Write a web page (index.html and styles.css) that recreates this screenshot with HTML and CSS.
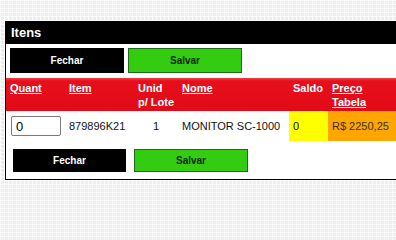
FILE: index.html
```html
<!DOCTYPE html>
<html lang="pt">
<head>
<meta charset="utf-8">
<title>Itens</title>
<link rel="stylesheet" href="styles.css">
</head>
<body>
<div class="panel">
  <div class="panel-title">Itens</div>
  <div class="toolbar toolbar-top">
    <button class="btn btn-dark">Fechar</button>
    <button class="btn btn-green">Salvar</button>
  </div>
  <table class="grid">
    <colgroup>
      <col class="c-quant"><col class="c-item"><col class="c-unid"><col class="c-nome"><col class="c-saldo"><col class="c-preco">
    </colgroup>
    <thead>
      <tr>
        <th><a href="#">Quant</a></th>
        <th><a href="#">Item</a></th>
        <th>Unid<br>p/ Lote</th>
        <th><a href="#">Nome</a></th>
        <th>Saldo</th>
        <th><a href="#">Preço<br>Tabela</a></th>
      </tr>
    </thead>
    <tbody>
      <tr>
        <td><input class="qty" type="text" value="0"></td>
        <td>879896K21</td>
        <td class="center">1</td>
        <td>MONITOR SC-1000</td>
        <td class="saldo">0</td>
        <td class="preco">R$ 2250,25</td>
      </tr>
    </tbody>
  </table>
  <div class="toolbar toolbar-bottom">
    <button class="btn btn-dark">Fechar</button>
    <button class="btn btn-green">Salvar</button>
  </div>
</div>
</body>
</html>
```

FILE: styles.css
```css
html, body {
  margin: 0;
  padding: 0;
  overflow: hidden;
}
body {
  width: 396px;
  height: 209px;
  background-color: #eeeeee;
  background-image:
    linear-gradient(90deg, rgba(255,255,255,0.85) 1px, transparent 1px),
    linear-gradient(rgba(255,255,255,0.85) 1px, transparent 1px);
  background-size: 4px 4px;
  font-family: "Liberation Sans", Arial, sans-serif;
}
.panel {
  margin: 21px 0 0 5px;
  width: 390px;
  border: 1px solid #000;
  border-right: none;
  background: #fff;
}
.panel-title {
  background: #000;
  color: #fff;
  font-weight: bold;
  font-size: 13px;
  height: 22px;
  line-height: 22px;
  padding-left: 5px;
}
.toolbar {
  display: flex;
}
.toolbar-top {
  padding: 4px 0 5px 4px;
  gap: 4px;
}
.toolbar-bottom {
  padding: 8px 0 7px 7px;
  gap: 8px;
}
.btn {
  font-family: "Liberation Sans", Arial, sans-serif;
  font-weight: bold;
  font-size: 10px;
  padding: 0;
  margin: 0;
  cursor: pointer;
  box-sizing: border-box;
}
.toolbar-top .btn {
  width: 114px;
  height: 25px;
}
.toolbar-bottom .btn {
  height: 23px;
}
.toolbar-bottom .btn-dark { width: 113px; }
.toolbar-bottom .btn-green { width: 114px; }
.btn-dark {
  background: #000;
  color: #fff;
  border: 1px solid #000;
}
.btn-green {
  background: #33cc11;
  color: #0d2a06;
  border: 1px solid #1d6a1a;
}
.grid {
  border-collapse: collapse;
  table-layout: fixed;
  width: 390px;
  font-size: 11px;
}
.c-quant { width: 59px; }
.c-item { width: 69px; }
.c-unid { width: 44px; }
.c-nome { width: 111px; }
.c-saldo { width: 39px; }
.c-preco { width: 68px; }
.grid thead tr {
  background: linear-gradient(#f2404a 0, #e60f1c 3px, #e20a17 100%);
}
.grid th {
  color: #fff;
  font-weight: bold;
  text-align: left;
  vertical-align: top;
  padding: 3px 0 2px 4px;
  height: 25px;
  line-height: 14px;
  font-size: 11px;
  white-space: nowrap;
}
.grid th a {
  color: #fff;
  text-decoration: underline;
}
.grid td {
  color: #111;
  padding: 0 0 0 4px;
  height: 30px;
  vertical-align: middle;
  line-height: 14px;
  white-space: nowrap;
}
.grid td.center {
  text-align: center;
  padding-left: 0;
}
.grid td.saldo {
  background: #ffff00;
}
.grid td.preco {
  background: #ffa500;
  color: #3a3020;
}
.qty {
  box-sizing: border-box;
  width: 50px;
  height: 20px;
  margin: 0 0 0 1px;
  padding: 0 4px;
  border: 1px solid #7a7a7a;
  border-radius: 2px;
  font-family: "Liberation Sans", Arial, sans-serif;
  font-size: 13px;
  color: #000;
  background: #fff;
  display: block;
}
```
